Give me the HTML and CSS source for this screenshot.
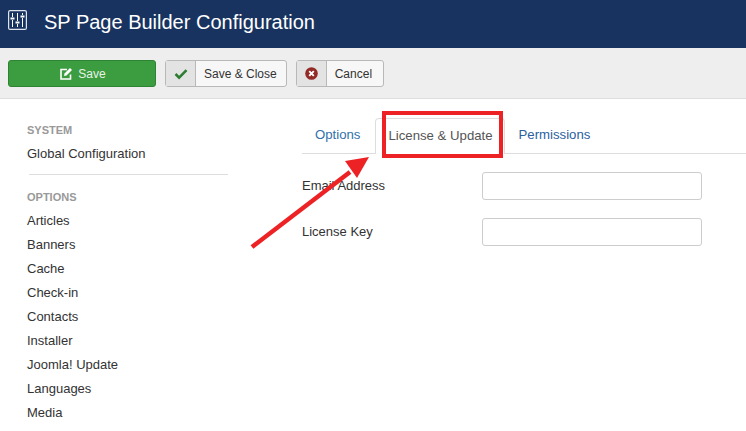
FILE: index.html
```html
<!DOCTYPE html>
<html lang="en">
<head>
<meta charset="utf-8">
<title>SP Page Builder Configuration</title>
<link rel="stylesheet" href="styles.css">
</head>
<body>
<header class="top">
	<svg class="logo" width="19" height="20" viewBox="0 0 19 20">
		<rect x="0.6" y="0.6" width="17.8" height="18.8" rx="1.5" class="logo-box"/>
		<path d="M4.5 3v4M4.5 10v7M9.5 3v8M9.5 14v3M14.5 3v2M14.5 8v9" class="logo-line"/>
		<path d="M2.5 8.5h4M7.5 12.5h4M12.5 6.5h4" class="logo-knob"/>
	</svg>
	<h1>SP Page Builder Configuration</h1>
</header>
<div class="toolbar">
	<button class="btn save">
		<svg width="13" height="13" viewBox="0 0 13 13"><path d="M10.5 7.5v4.5H1V2.5h6" class="ic-box"/><path d="M4.5 6.5l-.5 2.5 2.5-.5L12 3l-2-2z" class="ic-pen"/></svg>
		Save
	</button>
	<button class="btn split">
		<span class="btn-ic">
			<svg width="14" height="12" viewBox="0 0 14 12"><path d="M1.5 6l3.6 3.6L12.5 2.2" class="ic-check"/></svg>
		</span>
		<span class="btn-txt">Save &amp; Close</span>
	</button>
	<button class="btn split">
		<span class="btn-ic">
			<svg width="13" height="13" viewBox="0 0 13 13"><circle cx="6.5" cy="6.5" r="6.3" fill="#942a25"/><path d="M4.2 4.2l4.6 4.6M8.8 4.2l-4.6 4.6" class="ic-x"/></svg>
		</span>
		<span class="btn-txt cancel">Cancel</span>
	</button>
</div>
<div class="main">
	<nav class="side">
		<div class="side-head">SYSTEM</div>
		<a>Global Configuration</a>
		<hr>
		<div class="side-head">OPTIONS</div>
		<a>Articles</a>
		<a>Banners</a>
		<a>Cache</a>
		<a>Check-in</a>
		<a>Contacts</a>
		<a>Installer</a>
		<a>Joomla! Update</a>
		<a>Languages</a>
		<a>Media</a>
	</nav>
	<div class="content">
		<ul class="tabs">
			<li>Options</li>
			<li class="active">License &amp; Update</li>
			<li>Permissions</li>
		</ul>
		<div class="row"><label>Email Address</label><input type="text"></div>
		<div class="row"><label>License Key</label><input type="text"></div>
	</div>
</div>
<div class="mark"></div>
<svg class="arrow" width="746" height="431" viewBox="0 0 746 431">
	<path d="M252 247L350 172" class="arrow-line"/>
	<path d="M369 157L345 161L357 178Z" class="arrow-head"/>
</svg>
</body>
</html>
```

FILE: styles.css
```css
html, body {margin:0; padding:0;}
body {width:746px; height:431px; overflow:hidden; position:relative; background:#fff; font-family:"Liberation Sans", Arial, sans-serif; font-size:13px; color:#333;}

.top {height:48px; background:#183360; display:flex; align-items:center; padding-left:8px; color:#fff;}
.logo {margin-right:17px; margin-top:-8px;}
.logo-box {fill:none; stroke:#dfe4ec; stroke-width:1.2;}
.logo-line {fill:none; stroke:#fff; stroke-width:1;}
.logo-knob {fill:none; stroke:#fff; stroke-width:2;}
.top h1 {margin:0 0 5px; font-size:20px; font-weight:normal; line-height:24px;}

.toolbar {height:51px; box-sizing:border-box; background:#eee; border-bottom:1px solid #ddd; display:flex; align-items:flex-start; padding:12px 0 0 8px;}
.btn {height:27px; box-sizing:border-box; padding:0; border-radius:3px; font:12px "Liberation Sans", Arial, sans-serif; display:flex; align-items:center;}
.save {width:148px; margin-right:9px; justify-content:center; gap:5px; background:#3c9c40; border:1px solid #2f8433; color:#e6f3e6; padding-left:2px;}
.ic-box {fill:none; stroke:#fff; stroke-width:1.6;}
.ic-pen {fill:#fff;}
.split {margin-right:9px; background:#f7f7f7; border:1px solid #b8b8b8; color:#333;}
.btn-ic {width:29px; height:100%; background:#e3e3e3; border-right:1px solid #b8b8b8; display:flex; align-items:center; justify-content:center;}
.btn-txt {padding:0 9px 0 8px;}
.btn-txt.cancel {padding-right:11px;}
.ic-check {fill:none; stroke:#2f7d32; stroke-width:2.6;}
.ic-x {fill:none; stroke:#fff; stroke-width:1.9;}

.main {display:flex;}
.side {width:200px; margin-left:27px; padding-top:23px; flex:none;}
.side a {display:block; height:24px; line-height:22px; color:#333;}
.side-head {font-size:11px; font-weight:bold; color:#999; line-height:16px; margin-bottom:5px;}
.side hr {border:0; border-top:1px solid #ddd; margin:7px 0 14px 2px; width:199px;}

.content {margin-left:75px; flex:1;}
.tabs {list-style:none; margin:19px 0 0; padding:0; height:35px; border-bottom:1px solid #ddd; display:flex; font-size:13.2px;}
.tabs li {height:35px; line-height:34px; box-sizing:border-box; padding:0 15px 0 13px;}
.tabs li:first-child {color:#3071a9;}
.tabs li:last-child {color:#2a5f9e; padding-left:14px;}
.tabs li.active {height:36px; padding:0 11px 0 12px; color:#555; background:#fff; border:1px solid #ddd; border-bottom:0; border-radius:4px 4px 0 0;}
.row {display:flex; align-items:center; height:28px; margin-top:18px;}
.row label {width:180px; padding-bottom:2px;}
.row input {width:220px; height:28px; box-sizing:border-box; border:1px solid #ccc; border-radius:3px; background:#fff; padding:0;}

.mark {position:absolute; left:382px; top:111px; width:121px; height:47px; box-sizing:border-box; border:4px solid #ec2224;}
.arrow {position:absolute; left:0; top:0; pointer-events:none;}
.arrow-line {fill:none; stroke:#ec2224; stroke-width:4.5;}
.arrow-head {fill:#ec2224;}
```
